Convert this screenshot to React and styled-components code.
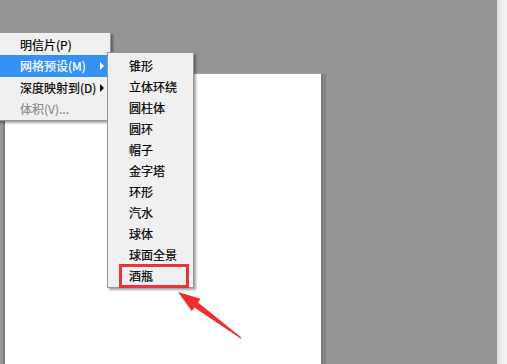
import React from 'react';
import styled, { createGlobalStyle } from 'styled-components';

const GlobalStyle = createGlobalStyle`
  html, body {
    margin: 0;
    padding: 0;
    overflow: hidden;
  }
  body {
    font-family: "Noto Sans CJK SC", "Liberation Sans", sans-serif;
    font-size: 12px;
  }
`;

const Page = styled.div`
  display: flex;
  width: 507px;
  height: 364px;
  position: relative;
  overflow: hidden;
`;

const Workspace = styled.div`
  flex: 1;
  background: #959595;
  padding: 74px 0 0 5px;
  display: flex;
`;

const Canvas = styled.div`
  width: 316px;
  height: 100%;
  background: #fff;
  box-shadow: -2px 0 0 #7b7b7b, 2px 0 0 #7a7a7a, 3px 0 0 #8c8c8c, 5px 0 0 #828282,
    0 -1px 0 #a3a3a3;
`;

const ScrollStrip = styled.div`
  width: 10px;
  background: linear-gradient(to right, #dadada, #ececec 40%, #f6f6f6);
`;

const Menu = styled.div`
  position: absolute;
  left: ${p => p.$left}px;
  top: ${p => p.$top}px;
  width: ${p => p.$width}px;
  display: flex;
  flex-direction: column;
  background: #f0f0f0;
  border: 1px solid #979797;
  box-shadow: 2px 2px 2px rgba(0, 0, 0, 0.35);
  padding: ${p => p.$pad};
  box-sizing: border-box;
`;

const Item = styled.div`
  position: relative;
  height: ${p => p.$h || 21}px;
  line-height: ${p => p.$h || 21}px;
  padding-left: ${p => p.$indent}px;
  margin-right: 2px;
  color: ${p => (p.$disabled ? '#8d8d8d' : p.$active ? '#fff' : '#000')};
  background: ${p => (p.$active ? '#3592f3' : 'transparent')};
  white-space: nowrap;
  -webkit-text-stroke: 0.2px currentColor;
`;

const SubArrow = styled.span`
  position: absolute;
  right: 4px;
  top: 50%;
  margin-top: -4px;
  width: 0;
  height: 0;
  border-top: 4px solid transparent;
  border-bottom: 4px solid transparent;
  border-left: 4px solid ${p => (p.$light ? '#fff' : '#000')};
`;

const Highlight = styled.div`
  position: absolute;
  left: 119px;
  top: 264px;
  width: 70px;
  height: 24px;
  border: 3px solid #e8343c;
  box-sizing: border-box;
`;

const Pointer = styled.svg`
  position: absolute;
  left: 0;
  top: 0;
  pointer-events: none;
`;

const mainItems = [
  { label: '明信片(P)' },
  { label: '网格预设(M)', active: true, sub: true, h: 22 },
  { label: '深度映射到(D)', sub: true },
  { label: '体积(V)...', disabled: true },
];

const presets = ['锥形', '立体环绕', '圆柱体', '圆环', '帽子', '金字塔', '环形', '汽水', '球体', '球面全景', '酒瓶'];

export default function App() {
  return (
    <>
      <GlobalStyle />
      <Page>
        <Workspace>
          <Canvas />
        </Workspace>
        <ScrollStrip />

        <Menu $left={-3} $top={32} $width={114} $pad="1px 0 1px 0">
          {mainItems.map(it => (
            <Item key={it.label} $indent={22} $h={it.h} $active={it.active} $disabled={it.disabled}>
              {it.label}
              {it.sub && <SubArrow $light={it.active} />}
            </Item>
          ))}
        </Menu>

        <Menu $left={107} $top={52} $width={87} $pad="2px 0 1px 0">
          {presets.map(name => (
            <Item key={name} $indent={21}>{name}</Item>
          ))}
        </Menu>

        <Highlight />

        <Pointer width="507" height="364" viewBox="0 0 507 364">
          <polygon
            points="178,292 200.5,298.8 198,302.4 241.4,337.4 240.6,338.6 194.4,307.6 191.9,311.2"
            fill="#ee2f2f"
          />
        </Pointer>
      </Page>
    </>
  );
}
